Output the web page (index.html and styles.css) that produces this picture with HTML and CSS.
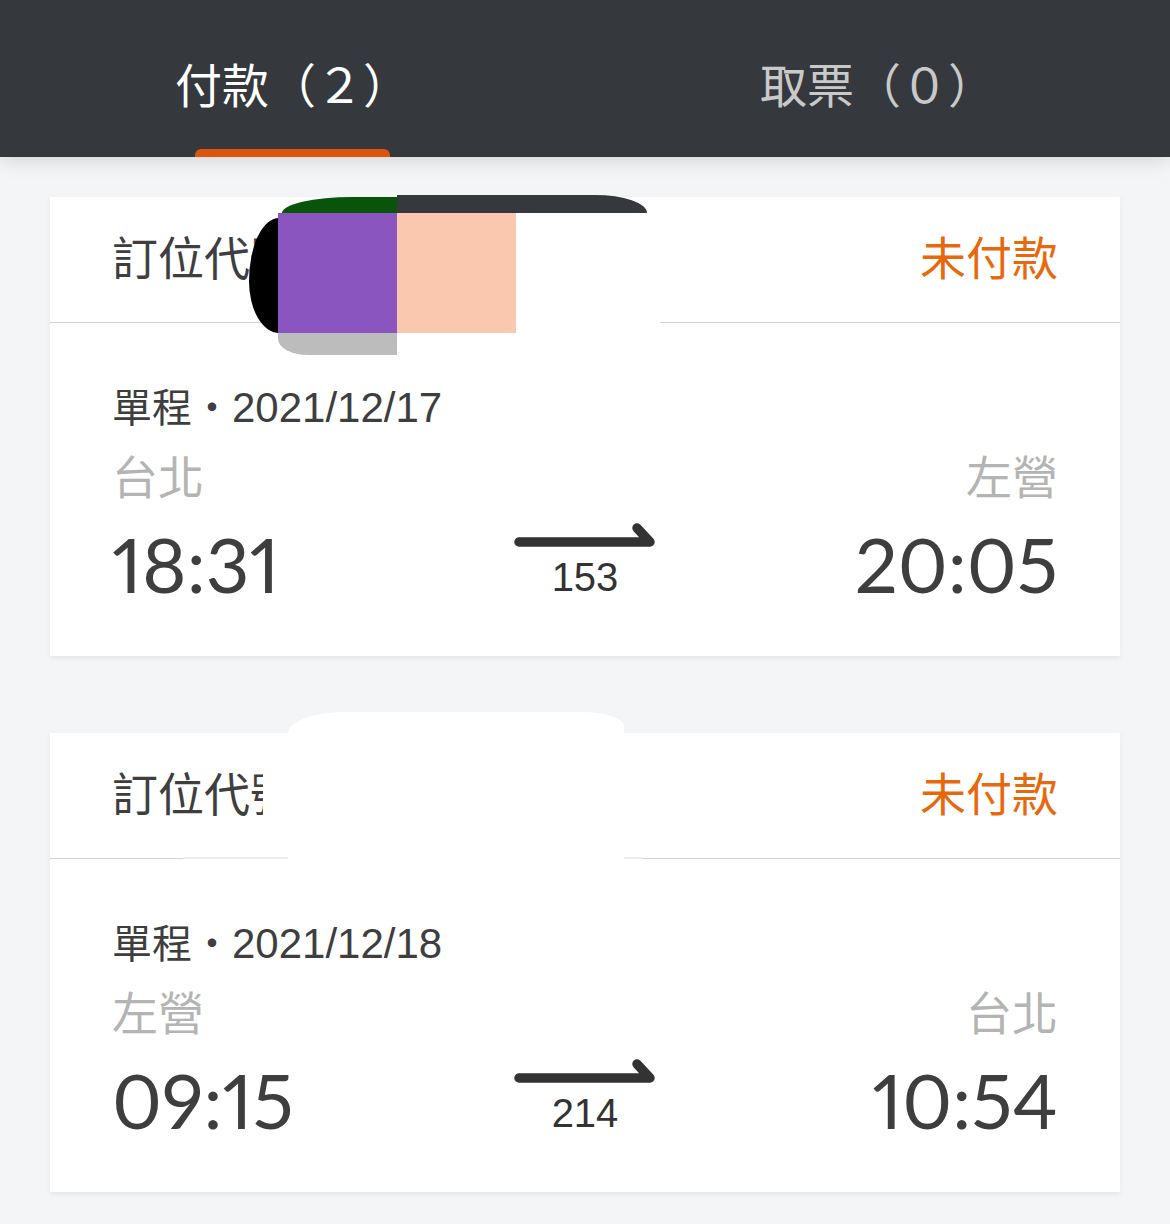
FILE: index.html
```html
<!DOCTYPE html>
<html lang="zh-Hant">
<head>
<meta charset="utf-8">
<title>訂位紀錄</title>
<link rel="stylesheet" href="styles.css">
</head>
<body>
<header class="tabs">
  <div class="tab tab-active">
    <span class="tab-label">付款（２）</span>
    <span class="tab-indicator"></span>
  </div>
  <div class="tab">
    <span class="tab-label">取票（０）</span>
  </div>
</header>

<main class="list">
  <section class="card">
    <div class="card-head">
      <span class="pnr">訂位代號</span>
      <span class="status">未付款</span>
    </div>
    <div class="card-body">
      <div class="trip-date">單程・<span class="date-num">2021/12/17</span></div>
      <div class="stations">
        <span>台北</span>
        <span>左營</span>
      </div>
      <div class="times">
        <span class="time">18:31</span>
        <div class="train">
          <svg class="arrow" width="144" height="34" viewBox="0 0 144 34"><path d="M6 25 H137 L124 11" fill="none" stroke="#333" stroke-width="9.5" stroke-linecap="round" stroke-linejoin="round"/></svg>
          <span class="train-no">153</span>
        </div>
        <span class="time time-end">20:05</span>
      </div>
    </div>
    <div class="redact redact-1">
      <span class="r-dark"></span>
      <span class="r-green"></span>
      <span class="r-black"></span>
      <span class="r-purple"></span>
      <span class="r-peach"></span>
      <span class="r-white"></span>
      <span class="r-gray"></span>
    </div>
  </section>

  <section class="card">
    <div class="card-head">
      <span class="pnr">訂位代號</span>
      <span class="status">未付款</span>
    </div>
    <div class="card-body">
      <div class="trip-date">單程・<span class="date-num">2021/12/18</span></div>
      <div class="stations">
        <span>左營</span>
        <span>台北</span>
      </div>
      <div class="times">
        <span class="time">09:15</span>
        <div class="train">
          <svg class="arrow" width="144" height="34" viewBox="0 0 144 34"><path d="M6 25 H137 L124 11" fill="none" stroke="#333" stroke-width="9.5" stroke-linecap="round" stroke-linejoin="round"/></svg>
          <span class="train-no">214</span>
        </div>
        <span class="time time-end">10:54</span>
      </div>
    </div>
    <div class="redact redact-2">
      <span class="r-line r-line-a"></span>
      <span class="r-line r-line-b"></span>
      <span class="r-blob"></span>
      <span class="r-cover"></span>
    </div>
  </section>
</main>
</body>
</html>
```

FILE: styles.css
```css
* { box-sizing: border-box; }

html, body {
  margin: 0;
  padding: 0;
}

body {
  background: #f4f5f7;
  font-family: "Liberation Sans", "Noto Sans CJK TC", sans-serif;
  color: #3e3e3e;
}

/* ---------- tabs ---------- */
.tabs {
  position: relative;
  z-index: 2;
  display: flex;
  height: 157px;
  background: #35383d;
  box-shadow: 0 4px 18px rgba(0, 0, 0, 0.13);
}

.tab {
  flex: 1 1 0;
  display: flex;
  flex-direction: column;
  align-items: center;
  justify-content: space-between;
  padding-top: 55px;
}

.tab-label {
  font-family: "Noto Sans CJK TC", sans-serif;
  font-size: 47px;
  line-height: 56px;
  color: #c9c9c9;
}

.tab-active .tab-label {
  color: #ffffff;
}

.tab-indicator {
  width: 195px;
  height: 8px;
  background: #dc540e;
  border-radius: 6px 6px 0 0;
}

/* ---------- list ---------- */
.list {
  display: flex;
  flex-direction: column;
  gap: 77px;
  padding: 40px 50px;
}

.card {
  position: relative;
  background: #ffffff;
  box-shadow: 0 2px 5px rgba(0, 0, 0, 0.07);
}

.card-head {
  display: flex;
  align-items: center;
  justify-content: space-between;
  height: 126px;
  padding: 0 62px 10px;
  border-bottom: 1px solid #d2d2d2;
  font-size: 46px;
}

.pnr {
  color: #3e3e3e;
}

.status {
  color: #e8690d;
}

.card-body {
  padding: 57px 62px 46px;
}

.trip-date {
  font-size: 40px;
  line-height: 56px;
  color: #3e3e3e;
}

.date-num {
  font-size: 42px;
}

.stations {
  display: flex;
  justify-content: space-between;
  margin-top: 11px;
  font-size: 46px;
  line-height: 62px;
  color: #b4b4b4;
}

.times {
  display: grid;
  grid-template-columns: 1fr auto 1fr;
  align-items: start;
  margin-top: 8px;
}

.time {
  font-family: Lato, "Liberation Sans", sans-serif;
  font-variant-numeric: proportional-nums;
  font-size: 76px;
  line-height: 93px;
  color: #3e3e3e;
}

.time-end {
  text-align: right;
}

.train {
  display: flex;
  flex-direction: column;
  align-items: center;
  gap: 6px;
}

.arrow {
  display: block;
}

.train-no {
  font-size: 40px;
  line-height: 40px;
  color: #333333;
}

/* ---------- redaction marks over the booking number ---------- */
.redact span {
  position: absolute;
  display: block;
}

.redact-1 .r-dark {
  left: 347px;
  top: -2px;
  width: 250px;
  height: 18px;
  background: #35383d;
  border-top-right-radius: 52px 18px;
}

.redact-1 .r-green {
  left: 232px;
  top: 0;
  width: 115px;
  height: 16px;
  background: #07540a;
  border-top-left-radius: 70px 16px;
}

.redact-1 .r-black {
  left: 199px;
  top: 21px;
  width: 30px;
  height: 115px;
  background: #000000;
  border-radius: 100% 0 0 100% / 55% 0 0 45%;
}

.redact-1 .r-purple {
  left: 228px;
  top: 16px;
  width: 119px;
  height: 120px;
  background: #8b55c0;
}

.redact-1 .r-peach {
  left: 347px;
  top: 16px;
  width: 119px;
  height: 120px;
  background: #fac8ae;
}

.redact-1 .r-white {
  left: 466px;
  top: 16px;
  width: 144px;
  height: 112px;
  background: #ffffff;
}

.redact-1 .r-gray {
  left: 228px;
  top: 136px;
  width: 119px;
  height: 22px;
  background: #bcbcbc;
  border-bottom-left-radius: 30px 16px;
}

.redact-2 .r-line {
  top: 124px;
  height: 2px;
  background: #ededed;
}

.redact-2 .r-line-a {
  left: 133px;
  width: 118px;
}

.redact-2 .r-line-b {
  left: 570px;
  width: 22px;
}

.redact-2 .r-blob {
  left: 238px;
  top: -21px;
  width: 336px;
  height: 148px;
  background: #ffffff;
  border-radius: 56px 44px 0 0 / 22px 14px 0 0;
}

.redact-2 .r-cover {
  left: 213px;
  top: 20px;
  width: 40px;
  height: 96px;
  background: #ffffff;
}
```
